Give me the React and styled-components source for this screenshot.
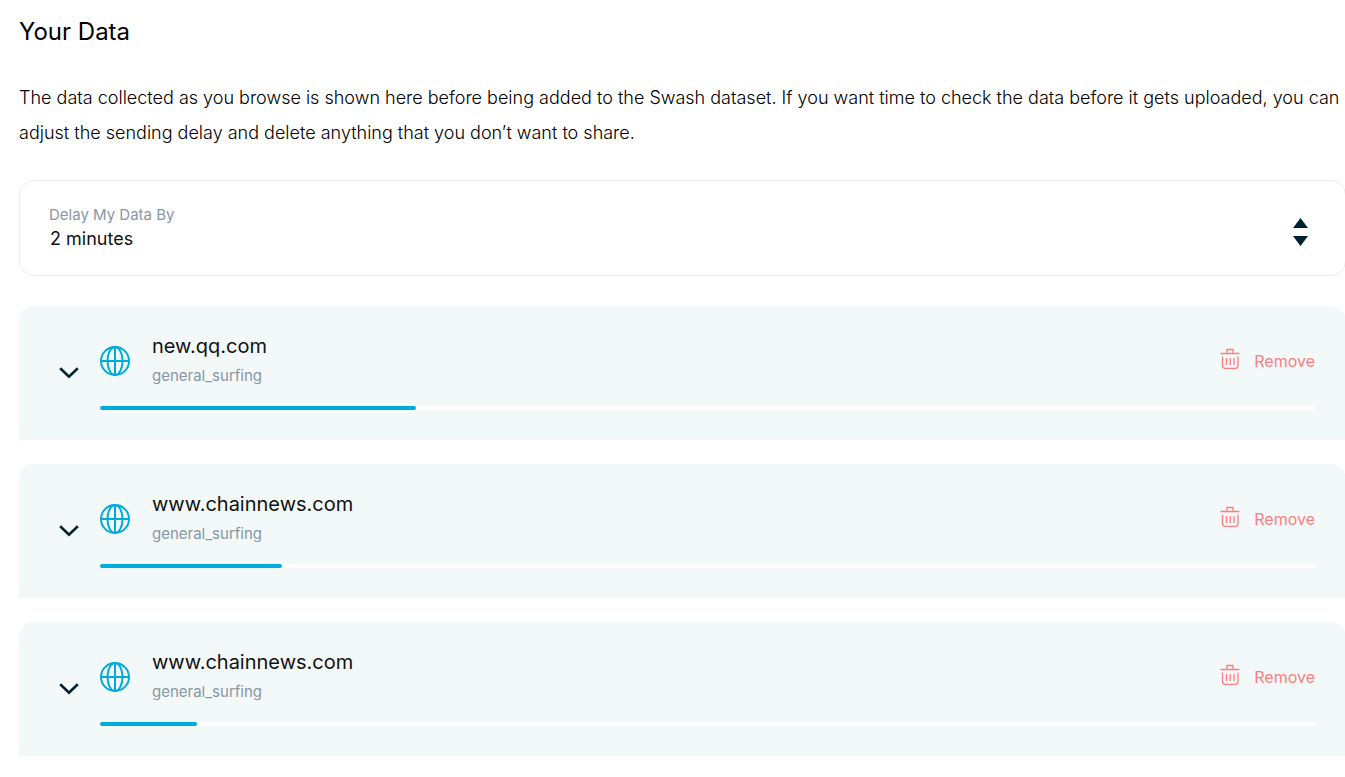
import React from "react";
import styled, { createGlobalStyle } from "styled-components";

const GlobalStyle = createGlobalStyle`
  * { box-sizing: border-box; }
  body {
    margin: 0;
    background: #fff;
    color: #000;
    font-family: Inter, "Liberation Sans", sans-serif;
    overflow-x: hidden;
  }
`;

const Page = styled.main`
  margin: 0 -1px 0 19px;
  padding: 16px 0 20px;
`;

const Title = styled.h1`
  margin: 0 0 32px;
  font-size: 24px;
  line-height: 32px;
  font-weight: 400;
`;

const Intro = styled.p`
  margin: 0 0 30px;
  font-size: 18px;
  line-height: 35px;
  font-weight: 300;
`;

const DelayBox = styled.div`
  position: relative;
  height: 96px;
  margin-bottom: 30px;
  padding: 24px 29px;
  border: 1px solid #e9ecee;
  border-radius: 15px;
`;

const DelayLabel = styled.label`
  display: block;
  font-size: 15px;
  line-height: 20px;
  font-weight: 400;
  color: #8797a3;
`;

const DelaySelect = styled.select`
  appearance: none;
  display: block;
  width: 100%;
  height: 26px;
  margin: 0;
  padding: 0 1px;
  border: 0;
  background: transparent;
  color: #111;
  font-family: inherit;
  font-size: 18px;
  font-weight: 400;
`;

const SortIcon = styled.svg`
  position: absolute;
  top: 37px;
  right: 37px;
  pointer-events: none;
`;

const List = styled.ul`
  display: flex;
  flex-direction: column;
  gap: 24px;
  margin: 0;
  padding: 0;
  list-style: none;
`;

const Card = styled.li`
  display: flex;
  align-items: center;
  gap: 21px;
  padding: 25px 31px 30px 40px;
  border-radius: 15px 15px 0 0;
  background: #f3f9f9;
`;

const ExpandButton = styled.button`
  display: flex;
  width: 20px;
  margin-top: 4px;
  padding: 0;
  border: 0;
  background: none;
  cursor: pointer;
`;

const CardBody = styled.div`
  flex: 1;
`;

const Summary = styled.div`
  display: flex;
  align-items: center;
  height: 60px;
  margin-bottom: 15px;
`;

const Names = styled.div`
  flex: 1;
  margin-left: 22px;
`;

const Site = styled.h2`
  margin: 0;
  font-size: 20px;
  line-height: 30px;
  font-weight: 400;
  color: #111;
`;

const Module = styled.div`
  font-size: 15px;
  line-height: 30px;
  font-weight: 400;
  color: #8797a3;
`;

const RemoveButton = styled.button`
  display: flex;
  align-items: center;
  gap: 14px;
  padding: 0;
  border: 0;
  background: none;
  color: #ff7d7d;
  font-family: inherit;
  font-size: 16px;
  line-height: 24px;
  font-weight: 400;
  cursor: pointer;

  svg { margin-bottom: 6px; }
`;

const Track = styled.div`
  height: 4px;
  border-radius: 2px;
  background: #fff;
`;

const Fill = styled.div`
  height: 100%;
  border-radius: 2px;
  background: #00aadb;
`;

const Globe = () => (
  <svg width="30" height="30" viewBox="0 0 30 30" fill="none" stroke="#00aadb" strokeWidth="2" aria-hidden="true">
    <circle cx="15" cy="15" r="14" />
    <ellipse cx="15" cy="15" rx="7.5" ry="14" />
    <path d="M15 1V29M1 15H29" />
  </svg>
);

const Chevron = () => (
  <svg width="20" height="12" viewBox="0 0 20 12" fill="none" stroke="#002230" strokeWidth="2.6" aria-hidden="true">
    <path d="M1.200 1.200L10 9.800L18.800 1.200" />
  </svg>
);

const Trash = () => (
  <svg width="20" height="21" viewBox="0 0 20 21" fill="none" stroke="#ff7d7d" strokeWidth="1.3" aria-hidden="true">
    <path d="M0.500 5.500H19.500M7 5.500V1.500H13V5.500M2.500 8.500V17.500Q2.500 20.300 5 20.300H15.500Q18 20.300 18 17.500V8.500M6.500 10V17M10.200 10V17M14 10V17" />
  </svg>
);

const items = [
  { id: 1, site: "new.qq.com", module: "general_surfing", progress: 26 },
  { id: 2, site: "www.chainnews.com", module: "general_surfing", progress: 15 },
  { id: 3, site: "www.chainnews.com", module: "general_surfing", progress: 8 },
];

export default function App() {
  return (
    <>
      <GlobalStyle />
      <Page>
        <Title>Your Data</Title>
        <Intro>
          The data collected as you browse is shown here before being added to the Swash dataset. If you want time to
          check the data before it gets uploaded, you can adjust the sending delay and delete anything that you don’t
          want to share.
        </Intro>
        <DelayBox>
          <DelayLabel htmlFor="delay">Delay My Data By</DelayLabel>
          <DelaySelect id="delay" defaultValue="2">
            <option value="2">2 minutes</option>
          </DelaySelect>
          <SortIcon width="15" height="28" viewBox="0 0 15 28" fill="#002230" aria-hidden="true">
            <path d="M0 10L7.500 0L15 10ZM0 18H15L7.500 28Z" />
          </SortIcon>
        </DelayBox>
        <List>
          {items.map((item) => (
            <Card key={item.id}>
              <ExpandButton aria-label={`Expand ${item.site}`}>
                <Chevron />
              </ExpandButton>
              <CardBody>
                <Summary>
                  <Globe />
                  <Names>
                    <Site>{item.site}</Site>
                    <Module>{item.module}</Module>
                  </Names>
                  <RemoveButton>
                    <Trash />
                    Remove
                  </RemoveButton>
                </Summary>
                <Track>
                  <Fill style={{ width: `${item.progress}%` }} />
                </Track>
              </CardBody>
            </Card>
          ))}
        </List>
      </Page>
    </>
  );
}
